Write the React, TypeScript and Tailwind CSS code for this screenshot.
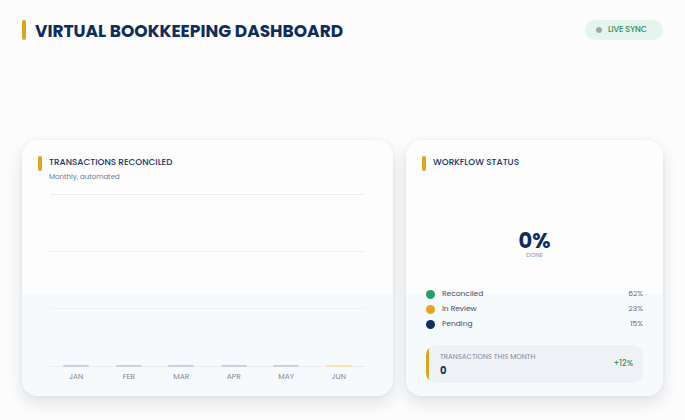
import React from 'react'

const FONT = 'font-["Poppins","Inter","Noto_Sans",sans-serif]'

const months = [
  { label: 'JAN', color: 'bg-[#cbd2de]' },
  { label: 'FEB', color: 'bg-[#cbd2de]' },
  { label: 'MAR', color: 'bg-[#cbd2de]' },
  { label: 'APR', color: 'bg-[#cbd2de]' },
  { label: 'MAY', color: 'bg-[#cbd2de]' },
  { label: 'JUN', color: 'bg-[#f3e3b5]' },
]

const legend = [
  { label: 'Reconciled', value: '62%', dot: 'bg-[#22a06b]' },
  { label: 'In Review', value: '23%', dot: 'bg-[#dfa81b]' },
  { label: 'Pending', value: '15%', dot: 'bg-[#0f2d5c]' },
]

function CardTitle({ title, subtitle }: { title: string; subtitle?: string }) {
  return (
    <div className="flex gap-[7px]">
      <span className="h-[15px] w-[4px] shrink-0 rounded-full bg-[#d9a61c]" />
      <div>
        <div className="text-[8.8px] font-medium leading-[13px] text-[#16345f]">{title}</div>
        {subtitle && <div className="mt-[2px] text-[7px] leading-[11px] text-[#6b7a90]">{subtitle}</div>}
      </div>
    </div>
  )
}

const cardClass =
  'flex h-[256px] flex-col rounded-[16px] bg-[linear-gradient(180deg,#fdfdfe_60%,#f7fafc_60%)] pt-[16px] shadow-[0_7px_16px_rgba(20,30,50,0.12),0_0_4px_rgba(20,30,50,0.05)]'

function TransactionsCard() {
  return (
    <div className={`${cardClass} px-[16px]`}>
      <CardTitle title="TRANSACTIONS RECONCILED" subtitle="Monthly, automated" />
      <div className="mx-[12px] mt-[12px] flex flex-col">
        {/* grid lines */}
        <div className="h-[57px] border-t border-[#e9edf3]" />
        <div className="h-[57px] border-t border-[#edf0f5]" />
        <div className="h-[58px] border-t border-[#edf0f5]" />
        <div className="relative border-t border-[#e9edf3]">
          <div className="absolute inset-x-0 -top-[2px] grid grid-cols-6">
            {months.map((m) => (
              <div key={m.label} className="flex justify-center">
                <span className={`h-[2px] w-[26px] rounded-full ${m.color}`} />
              </div>
            ))}
          </div>
          <div className="grid grid-cols-6 pt-[4px]">
            {months.map((m) => (
              <div key={m.label} className="text-center text-[7.5px] leading-[12px] text-[#7d8799]">
                {m.label}
              </div>
            ))}
          </div>
        </div>
      </div>
    </div>
  )
}

function WorkflowCard() {
  return (
    <div className={`${cardClass} px-[20px]`}>
      <div className="-ml-[4px]">
        <CardTitle title="WORKFLOW STATUS" />
      </div>
      <div className="mt-[60px] flex flex-col items-center">
        <div className="text-[21px] font-bold leading-[20px] text-[#0f2d5c]">0%</div>
        <div className="text-[6px] leading-[8px] text-[#8a94a6]">DONE</div>
      </div>
      <div className="mt-[30px] flex flex-col gap-[5px]">
        {legend.map((l) => (
          <div key={l.label} className="flex items-center text-[7.5px] leading-[10px] text-[#3e4c63]">
            <span className={`mr-[7px] h-[9px] w-[9px] rounded-full ${l.dot}`} />
            <span className="flex-1">{l.label}</span>
            <span className="text-[#5b6678]">{l.value}</span>
          </div>
        ))}
      </div>
      <div className="mt-[16px] flex h-[38px] items-center overflow-hidden rounded-[10px] bg-[#eef2f7]">
        <span className="h-full w-[3px] rounded-full bg-[#d9a61c]" />
        <div className="flex flex-1 items-center justify-between pl-[11px] pr-[10px]">
          <div>
            <div className="text-[7px] leading-[10px] text-[#7d8799]">TRANSACTIONS THIS MONTH</div>
            <div className="mt-[3px] text-[10px] font-bold leading-[12px] text-[#16345f]">0</div>
          </div>
          <div className="text-[8px] font-medium text-[#2e9a62]">+12%</div>
        </div>
      </div>
    </div>
  )
}

export default function App() {
  return (
    <div className={`${FONT} h-[420px] w-[685px] overflow-hidden bg-[#fcfcfd] px-[22px] pt-[20px]`}>
      <header className="flex h-[20px] items-center justify-between">
        <div className="flex items-center gap-[9px]">
          <span className="h-[20px] w-[4px] rounded-full bg-[#d9a61c]" />
          <h1 className="mt-[2px] text-[17px] font-bold leading-[20px] text-[#0f2d5c]">
            VIRTUAL BOOKKEEPING DASHBOARD
          </h1>
        </div>
        <div className="flex h-[20px] items-center gap-[6px] rounded-full bg-[#e5f4ec] pl-[11px] pr-[16px]">
          <span className="h-[6px] w-[6px] rounded-full bg-[#9aa7b6]" />
          <span className="text-[8px] font-medium text-[#2f8a5c]">LIVE SYNC</span>
        </div>
      </header>
      <main className="mt-[100px] grid grid-cols-[371px_257px] gap-[13px]">
        <TransactionsCard />
        <WorkflowCard />
      </main>
    </div>
  )
}
